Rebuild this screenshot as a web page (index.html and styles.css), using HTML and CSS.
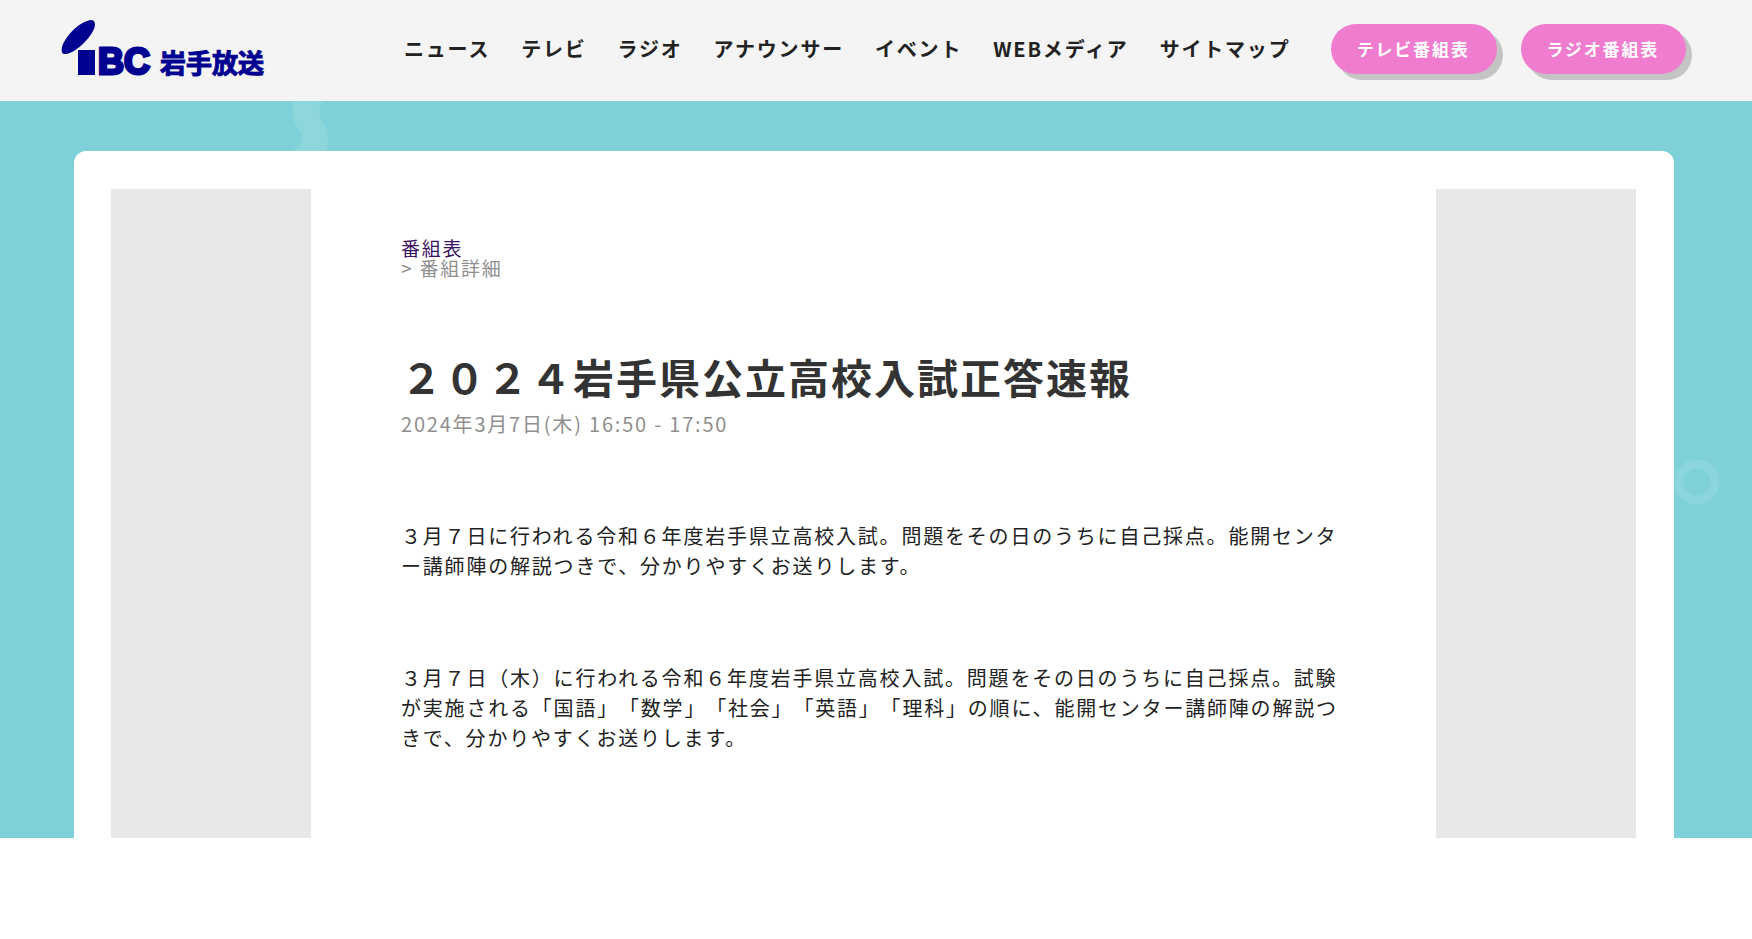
FILE: index.html
```html
<!DOCTYPE html>
<html lang="ja">
<head>
<meta charset="utf-8">
<title>２０２４岩手県公立高校入試正答速報 | IBC岩手放送</title>
<link rel="stylesheet" href="styles.css">
</head>
<body>
<header class="header">
  <a class="logo" href="#" aria-label="IBC岩手放送">
    <svg class="logo-mark" viewBox="0 0 206 66" width="206" height="66">
      <path d="M2 33C-1 24 18 2 31 1C35 1 36 5 34 10C29 21 15 34 6 35C4 35 2 35 2 33Z"/>
      <path d="M18 31H35V56H18Z"/>
      <text class="logo-latin" x="38" y="55">BC</text>
      <text class="logo-name" x="100" y="54">岩手放送</text>
    </svg>
  </a>
  <nav class="nav">
    <a href="#">ニュース</a>
    <a href="#">テレビ</a>
    <a href="#">ラジオ</a>
    <a href="#">アナウンサー</a>
    <a href="#">イベント</a>
    <a href="#">WEBメディア</a>
    <a href="#">サイトマップ</a>
  </nav>
  <div class="schedules">
    <a class="pill" href="#">テレビ番組表</a>
    <a class="pill" href="#">ラジオ番組表</a>
  </div>
</header>
<main class="main">
  <svg class="deco deco-wave" viewBox="0 0 40 50" width="40" height="50">
    <path d="M4 0H34C28 8 30 14 34 21C40 31 39 40 38 50H3C14 43 16 37 9 27C3 18 3 9 4 0Z"/>
  </svg>
  <svg class="deco deco-ring" viewBox="0 0 46 46" width="46" height="46">
    <circle cx="23" cy="23" r="18"/>
  </svg>
  <div class="card">
    <aside class="side"></aside>
    <article class="content">
      <div class="crumbs">
        <a href="#">番組表</a>
        <div>&gt; 番組詳細</div>
      </div>
      <h1 class="title">２０２４岩手県公立高校入試正答速報</h1>
      <p class="date">2024年3月7日(木) 16:50 - 17:50</p>
      <p class="text">３月７日に行われる令和６年度岩手県立高校入試。問題をその日のうちに自己採点。能開センター講師陣の解説つきで、分かりやすくお送りします。</p>
      <p class="text">３月７日（木）に行われる令和６年度岩手県立高校入試。問題をその日のうちに自己採点。試験が実施される「国語」「数学」「社会」「英語」「理科」の順に、能開センター講師陣の解説つきで、分かりやすくお送りします。</p>
    </article>
    <aside class="side"></aside>
  </div>
</main>
</body>
</html>
```
FILE: styles.css
```css
* {
  box-sizing: border-box;
}

body {
  margin: 0;
  background: #fff;
  color: #222;
  font-family: "Noto Sans CJK JP", sans-serif;
  font-size: 18px;
  letter-spacing: 0.1em;
  text-spacing-trim: space-all;
}

a {
  text-decoration: none;
}

.header {
  display: flex;
  align-items: center;
  height: 101px;
  padding: 0 66px 4px 60px;
  background: #f4f4f4;
}

.logo {
  flex: none;
  margin-right: 138px;
}

.logo-mark {
  display: block;
  margin-top: 6px;
  fill: #000091;
}

.logo-latin,
.logo-name {
  letter-spacing: 0;
  stroke: #000091;
}

.logo-latin {
  font: 700 36px "Liberation Sans", sans-serif;
  stroke-width: 3px;
}

.logo-name {
  font: 700 26px "Noto Sans CJK JP", sans-serif;
  stroke-width: 1px;
}

.nav {
  display: flex;
  flex: 1;
  gap: 31px;
  font-size: 20px;
  font-weight: 700;
  line-height: 30px;
  white-space: nowrap;
}

.nav a {
  color: #222;
}

.schedules {
  display: flex;
  gap: 24px;
}

.pill {
  padding: 0 27px 0 26px;
  border-radius: 25px;
  background: #f07ccf;
  box-shadow: 6px 6px 0 #c4c4c4;
  color: #fff;
  font-size: 17px;
  font-weight: 700;
  line-height: 50px;
  white-space: nowrap;
}

.main {
  position: relative;
  padding: 50px 78px 0 74px;
  background: #7ed1d8;
}

.deco {
  position: absolute;
}

.deco-wave {
  top: 0;
  left: 289px;
  fill: #8cd6dc;
}

.deco-ring {
  top: 358px;
  right: 32px;
  fill: none;
  stroke: #8ad6dc;
  stroke-width: 9px;
}

.card {
  position: relative;
  display: flex;
  padding: 38px 38px 0 37px;
  border-radius: 12px 12px 0 0;
  background: #fff;
}

.side {
  flex: none;
  width: 200px;
  background: #e8e8e8;
}

.content {
  flex: 1;
  padding: 49px 90px 3px;
}

.crumbs {
  color: #8f8f8f;
  font-size: 19px;
  line-height: 20px;
}

.crumbs a {
  display: block;
  color: #3c145f;
}

.title {
  margin: 68px 0 0;
  color: #333;
  font-size: 41px;
  letter-spacing: 2px;
  line-height: 60px;
}

.date {
  margin: 3px 0 82px;
  color: #8f8f8f;
  font-size: 20px;
  line-height: 30px;
}

.text {
  margin: 0 0 82px;
  font-size: 20px;
  line-height: 30px;
}
```
